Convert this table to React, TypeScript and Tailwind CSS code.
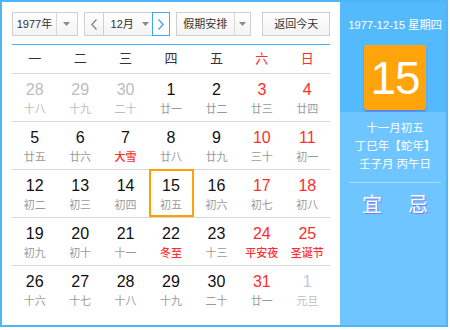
const weekDays = ["一", "二", "三", "四", "五", "六", "日"];

type Day = { n: number; sub: string; kind?: "prev" | "next"; hol?: boolean };

const weeks: Day[][] = [
  [
    { n: 28, sub: "十八", kind: "prev" },
    { n: 29, sub: "十九", kind: "prev" },
    { n: 30, sub: "二十", kind: "prev" },
    { n: 1, sub: "廿一" },
    { n: 2, sub: "廿二" },
    { n: 3, sub: "廿三" },
    { n: 4, sub: "廿四" },
  ],
  [
    { n: 5, sub: "廿五" },
    { n: 6, sub: "廿六" },
    { n: 7, sub: "大雪", hol: true },
    { n: 8, sub: "廿八" },
    { n: 9, sub: "廿九" },
    { n: 10, sub: "三十" },
    { n: 11, sub: "初一" },
  ],
  [
    { n: 12, sub: "初二" },
    { n: 13, sub: "初三" },
    { n: 14, sub: "初四" },
    { n: 15, sub: "初五" },
    { n: 16, sub: "初六" },
    { n: 17, sub: "初七" },
    { n: 18, sub: "初八" },
  ],
  [
    { n: 19, sub: "初九" },
    { n: 20, sub: "初十" },
    { n: 21, sub: "十一" },
    { n: 22, sub: "冬至", hol: true },
    { n: 23, sub: "十三" },
    { n: 24, sub: "平安夜", hol: true },
    { n: 25, sub: "圣诞节", hol: true },
  ],
  [
    { n: 26, sub: "十六" },
    { n: 27, sub: "十七" },
    { n: 28, sub: "十八" },
    { n: 29, sub: "十九" },
    { n: 30, sub: "二十" },
    { n: 31, sub: "廿一" },
    { n: 1, sub: "元旦", kind: "next" },
  ],
];

function Caret() {
  return (
    <svg width="7" height="4" viewBox="0 0 7 4">
      <path d="M0 0 H7 L3.5 4 Z" fill="#8a8a8a" />
    </svg>
  );
}

function Chevron({ dir, color }: { dir: "l" | "r"; color: string }) {
  return (
    <svg width="6" height="11" viewBox="0 0 6 11">
      <polyline
        points={dir === "l" ? "5.5,0.5 0.8,5.5 5.5,10.5" : "0.5,0.5 5.2,5.5 0.5,10.5"}
        fill="none"
        stroke={color}
        strokeWidth="1.1"
      />
    </svg>
  );
}

function Cell({ d, col, selected }: { d: Day; col: number; selected: boolean }) {
  const weekend = col >= 5;
  let numColor = "text-[#111]";
  if (d.kind === "prev") numColor = "text-[#bdbdbd]";
  else if (d.kind === "next") numColor = "text-[#b9c9dc]";
  else if (weekend) numColor = "text-[#ff2d2d]";
  let subColor = "text-[#9a9a9a]";
  if (d.kind) subColor = "text-[#bdbdbd]";
  if (d.hol) subColor = "text-[#ff2d2d] font-medium";
  return (
    <div className="relative flex flex-col items-center pt-[6px]">
      {selected && <div className="absolute left-[1px] right-0 top-[-1px] bottom-0 border-2 border-[#ffa200]" />}
      <div className={`text-[16px] leading-[20px] ${numColor}`}>{d.n}</div>
      <div className={`mt-[2px] text-[11px] leading-[14px] ${subColor}`}>{d.sub}</div>
    </div>
  );
}

export default function App() {
  return (
    <div className="w-[450px] h-[330px] bg-white font-['Liberation_Sans','Noto_Sans_CJK_SC',sans-serif]">
      <div className="w-[448px] h-[327px] border-2 border-[#4db6f8] flex">
        <div className="w-[338px] flex flex-col px-[10px] pt-[10px]">
          <div className="flex h-[24px] text-[11px] text-[#333]">
            <div className="w-[66px] flex border border-[#cfcfcf] bg-linear-to-b from-white to-[#f3f3f3]">
              <div className="w-[44px] flex items-center justify-center border-r border-[#d8d8d8]">1977年</div>
              <div className="flex-1 flex items-center justify-center">
                <Caret />
              </div>
            </div>
            <div className="ml-[6px] flex">
              <div className="w-[19px] flex items-center justify-center border border-r-0 border-[#cfcfcf] bg-linear-to-b from-white to-[#f3f3f3]">
                <Chevron dir="l" color="#777" />
              </div>
              <div className="w-[49px] flex items-center justify-center gap-[8px] border border-r-0 border-[#cfcfcf] bg-linear-to-b from-white to-[#f3f3f3] pl-[4px]">
                <span>12月</span>
                <Caret />
              </div>
              <div className="w-[18px] flex items-center justify-center border border-[#3ea8f4] bg-white">
                <Chevron dir="r" color="#2f9cf0" />
              </div>
            </div>
            <div className="ml-[6px] w-[76px] flex border border-[#cfcfcf] bg-linear-to-b from-white to-[#f3f3f3]">
              <div className="w-[58px] flex items-center justify-center border-r border-[#d8d8d8]">假期安排</div>
              <div className="flex-1 flex items-center justify-center">
                <Caret />
              </div>
            </div>
            <div className="ml-[11px] w-[68px] flex items-center justify-center border border-[#cfcfcf] bg-linear-to-b from-white to-[#f3f3f3]">
              返回今天
            </div>
          </div>
          <div className="mt-[8px] w-[318px] h-px bg-[#47b3f7]" />
          <div className="grid grid-cols-7 w-[318px] h-[29px] items-center border-b border-[#d6d6d6] text-[13px]">
            {weekDays.map((w, i) => (
              <div key={w} className={`text-center ${i >= 5 ? "text-[#ff2d2d]" : "text-[#333]"}`}>
                {w}
              </div>
            ))}
          </div>
          {weeks.map((row, ri) => (
            <div
              key={ri}
              className={`grid grid-cols-7 w-[318px] h-[48px] ${ri < 4 ? "border-b border-[#d6d6d6]" : ""}`}
            >
              {row.map((d, ci) => (
                <Cell key={ci} d={d} col={ci} selected={ri === 2 && ci === 3} />
              ))}
            </div>
          ))}
        </div>
        <div className="flex-1 flex flex-col text-white">
          <div className="h-[110px] bg-[#53bafc] flex flex-col items-center pl-[4px]">
            <div className="mt-[16px] text-[11.5px] leading-[14px] tracking-[-0.2px]">1977-12-15 星期四</div>
            <div className="mt-[13px] w-[62px] h-[65px] rounded-[3px] bg-[#ffa40a] shadow-[0_2px_2px_rgba(90,90,230,0.55)] flex items-center justify-center text-[46px] leading-none tracking-[-1px]">
              15
            </div>
          </div>
          <div className="flex-1 bg-[#6fc5ff] flex flex-col items-center pl-[4px]">
            <div className="mt-[7px] text-[11.5px] leading-[18px]">十一月初五</div>
            <div className="text-[11.5px] leading-[18px]">丁巳年【蛇年】</div>
            <div className="text-[11.5px] leading-[19px]">壬子月 丙午日</div>
            <div className="mt-[8px] w-[92px] h-px bg-[#a9dcff]" />
            <div className="mt-[10px] flex gap-[26px] text-[20px] leading-[24px] [text-shadow:1px_1px_0_#7b78f0]">
              <span>宜</span>
              <span>忌</span>
            </div>
          </div>
        </div>
      </div>
    </div>
  );
}
